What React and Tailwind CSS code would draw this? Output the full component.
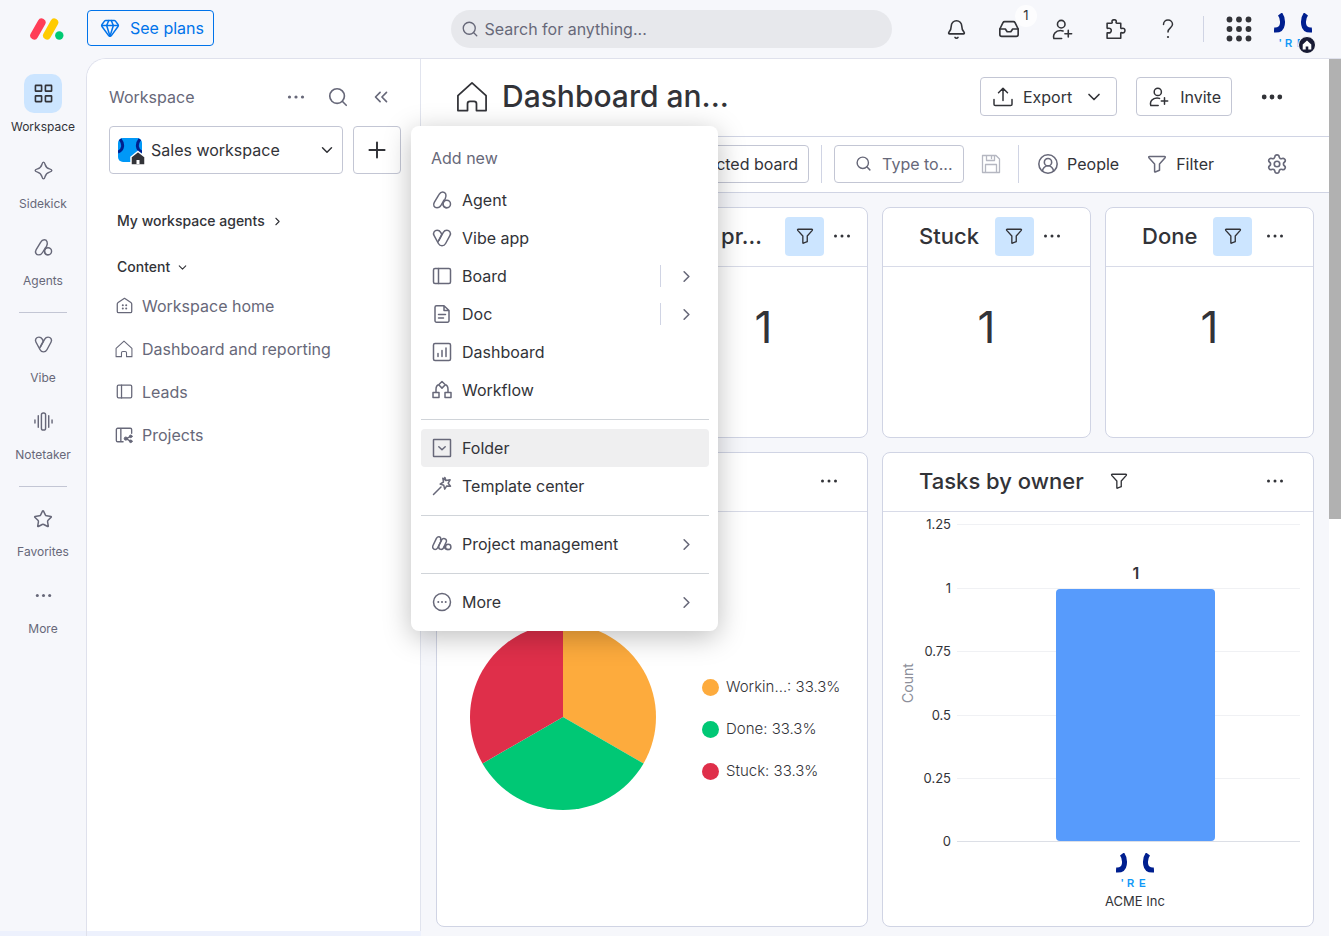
import React, { useState } from 'react';
import {
  Bell,
  ChevronDown,
  ChevronRight,
  ChevronsLeft,
  CircleUserRound,
  Gem,
  Inbox,
  Plus,
  Search,
  Settings,
  Star,
} from 'lucide-react';

const Icon = ({ size = 20, stroke = 1.5, children }) => (
  <svg
    width={size}
    height={size}
    viewBox="0 0 20 20"
    fill="none"
    stroke="currentColor"
    strokeWidth={stroke}
    strokeLinecap="round"
    strokeLinejoin="round"
    className="shrink-0"
    aria-hidden="true"
  >
    {children}
  </svg>
);

const DotsIcon = ({ size = 20, r = 1.6 }) => (
  <svg width={size} height={size} viewBox="0 0 20 20" fill="currentColor" className="shrink-0" aria-hidden="true">
    <circle cx="3.5" cy="10" r={r} />
    <circle cx="10" cy="10" r={r} />
    <circle cx="16.5" cy="10" r={r} />
  </svg>
);

const AgentIcon = (props) => (
  <Icon {...props}>
    <path d="M11.6 12.2 13.2 8.8c1.8-3.800.4-6.900-2.400-6.900-1.700 0-2.900 1-3.700 2.500L2.300 12.300c-1.700 3 0 5.500 2.700 5.500 2 0 3.200-1 4.200-2.800l2.900-5" />
    <circle cx="14.8" cy="14" r="3.700" />
    <path d="M11.1 14c0 2.200 1.500 3.700 3.700 3.700" />
  </Icon>
);

const VibeIcon = (props) => (
  <Icon {...props}>
    <path d="M9.800 6.400 8.700 4.300C7.900 2.900 6.600 2.200 5.200 2.200 2.500 2.200.700 4.900 2 7.400l4.400 8.100c1.600 3 5.600 3 7.200 0L18 7.400c1.300-2.500-.5-5.200-3.200-5.200-1.400 0-2.700.7-3.500 2.100L6.900 12.300" />
    <path d="m9.800 6.400-3.700 7.200" />
  </Icon>
);

const BoardIcon = (props) => (
  <Icon {...props}>
    <rect x="1.500" y="2.500" width="17" height="15" rx="1.500" />
    <path d="M6.500 2.500v15" />
  </Icon>
);

const SharedBoardIcon = (props) => (
  <Icon {...props}>
    <path d="M9 17.500H3A1.500 1.500 0 0 1 1.500 16V4A1.500 1.500 0 0 1 3 2.500h14A1.500 1.500 0 0 1 18.500 4v4M6.500 2.500v15M12.500 14l5-2.500M12.500 14l5 3" />
    <g fill="currentColor" strokeWidth="1">
      <circle cx="12" cy="14" r="1.800" />
      <circle cx="17.500" cy="11.500" r="1.500" />
      <circle cx="17.500" cy="17" r="1.500" />
    </g>
  </Icon>
);

const DocIcon = (props) => (
  <Icon {...props}>
    <path d="M12 1.800H4.500A1.500 1.500 0 0 0 3 3.300v13.400a1.500 1.500 0 0 0 1.500 1.500h11a1.500 1.500 0 0 0 1.500-1.500V6.500zM12 1.800v4.700h5M6.500 10.500h7M6.500 14h5" />
  </Icon>
);

const DashboardIcon = (props) => (
  <Icon {...props}>
    <rect x="1.500" y="1.500" width="17" height="17" rx="1.500" />
    <path d="M6 11.500v3M10 8.500v6M14 6v8.500" />
  </Icon>
);

const WorkflowIcon = (props) => (
  <Icon {...props}>
    <path d="m10 1.500 3.300 3.300L10 8.100 6.700 4.800zM6.700 4.800C4.800 5.200 4 7 4 9.500v2.500M13.300 4.800C15.200 5.200 16 7 16 9.500v2.500" />
    <rect x="1" y="12.500" width="6" height="5" />
    <rect x="13" y="12.500" width="6" height="5" />
  </Icon>
);

const FolderIcon = (props) => (
  <Icon {...props}>
    <rect x="1.500" y="1.500" width="17" height="17" rx=".5" />
    <path d="m6.800 8.800 3.200 3 3.200-3" />
  </Icon>
);

const WandIcon = (props) => (
  <Icon {...props}>
    <path d="M1.500 18.500 9 11M12.800 1.500l1.300 3 4-.7-1.900 3.400 2.300 3-3.800-.3-2 3.300-.9-3.900-3.700-1.200 3.400-2.100-.700-3.800 2.900 2.300z" />
  </Icon>
);

const ProjectIcon = (props) => (
  <Icon {...props}>
    <path d="M8.500 5.800c.7-1.700-.2-3-1.700-3-1 0-1.800.6-2.400 1.600L1 11.500c-.9 1.900.2 4 2.100 4 1.100 0 1.900-.6 2.500-1.600l4-7.900c1.400-2.500 5.600-1.400 4.700 1.800l-2.600 5.800c-1.100 2.500-5 2.400-5-.5 0-.6.2-1.100.5-1.700" />
    <path d="M9.400 6.300 7.200 11" />
    <circle cx="16.200" cy="12.900" r="2.700" />
    <path d="M12.200 12.500c.3 2 1.900 3.100 4 3.100" />
  </Icon>
);

const MoreCircleIcon = (props) => (
  <Icon {...props}>
    <circle cx="10" cy="10" r="8.500" />
    <path d="M6.300 10h.01M10 10h.01M13.700 10h.01" strokeWidth="2" />
  </Icon>
);

const FilterIcon = (props) => (
  <Icon {...props}>
    <path d="M2.500 2.500h15c.8 0 1 .6.600 1.200L12.500 10v6.300L8.200 18a.4.400 0 0 1-.6-.4V10L1.900 3.700c-.4-.6-.2-1.200.6-1.200z" />
  </Icon>
);

const HomeIcon = (props) => (
  <Icon {...props}>
    <path d="m10 1.200 8.800 8v9.300h-6v-4.300c0-1-.5-1.500-1.500-1.500H8.700c-1 0-1.500.5-1.500 1.500v4.300h-6V9.200z" />
  </Icon>
);

const WorkspaceHomeIcon = (props) => (
  <Icon {...props}>
    <path d="m10 1.500 7.500 5c.6.4 1 1 1 1.800V17c0 1-.5 1.500-1.500 1.500H3c-1 0-1.500-.5-1.500-1.500V8.300c0-.8.4-1.400 1-1.800z" />
    <path d="M8 9.700h.01M12 9.700h.01M8 13.500h.01M12 13.500h.01" strokeWidth="2.400" />
  </Icon>
);

const InviteIcon = (props) => (
  <Icon {...props}>
    <circle cx="8.800" cy="4.900" r="3.600" />
    <path d="M9.200 18.500H1.800c-1.300-4 1.700-7.500 6.200-7.500 1 0 1.700.1 2.500.4M15.500 10.800v6.400M12.300 14h6.400" />
  </Icon>
);

const PuzzleIcon = (props) => (
  <Icon {...props}>
    <path d="M2 4h4c.8 0 1-.4.800-1C6.300 1.500 7.300.700 8.700.700s2.400.8 1.900 2.300c-.2.600 0 1 .8 1H15v4.300c0 .7.400.9 1 .7 1.800-.6 3 .3 3 2s-1.200 2.600-3 2c-.6-.2-1 0-1 .7v4.600H2v-4.600c0-.7.300-.8.900-.6C4.600 13.600 6 12.700 6 11s-1.400-2.600-3.100-2.100C2.300 9.100 2 9 2 8.300z" />
  </Icon>
);

const HelpIcon = (props) => (
  <Icon {...props}>
    <path d="M5.500 5.500C5.500 2.800 7.500 1 10 1s4.500 1.800 4.500 4.300C14.500 9 10 8.800 10 13" />
    <path d="M10 18h.01" strokeWidth="2.200" />
  </Icon>
);

const ExportIcon = (props) => (
  <Icon {...props}>
    <path d="M1 12.500v4.700c0 .8.500 1.300 1.300 1.300h15.400c.8 0 1.300-.5 1.300-1.300v-4.700M10 13.500v-12M5.500 5.800 10 1.300l4.500 4.500" />
  </Icon>
);

const SaveIcon = (props) => (
  <Icon {...props}>
    <path d="M1.500 1.500H15L18.500 5v13.500h-17zM5.500 1.500v5h8v-5M4.500 18.500v-8h11v8M10.500 2.500v2" />
  </Icon>
);

const WorkspaceIcon = (props) => (
  <Icon {...props}>
    <rect x="1.500" y="1.500" width="6.500" height="6" rx=".5" />
    <rect x="12" y="1.500" width="6.500" height="6" rx=".5" />
    <rect x="1.500" y="12.500" width="6.500" height="6" rx=".5" />
    <rect x="12" y="12.500" width="6.500" height="6" rx=".5" />
  </Icon>
);

const SidekickIcon = (props) => (
  <Icon {...props}>
    <path d="M10 1.200c1 0 1.300 1 1.700 2.500.8 2.900 1.700 3.800 4.600 4.600 1.500.4 2.500.7 2.500 1.700s-1 1.300-2.500 1.700c-2.900.8-3.800 1.700-4.600 4.600-.4 1.500-.7 2.500-1.700 2.500s-1.300-1-1.700-2.500c-.8-2.900-1.700-3.800-4.600-4.600C2.200 11.300 1.200 11 1.200 10s1-1.300 2.500-1.700c2.900-.8 3.800-1.700 4.600-4.600.4-1.500.7-2.500 1.700-2.500z" />
  </Icon>
);

const NotetakerIcon = (props) => (
  <Icon {...props}>
    <rect x="7.800" y="1" width="4.400" height="18" rx="2" />
    <path d="M4.500 4v12M15.500 4v12M1 8.500v3M19 8.500v3" />
  </Icon>
);

const Logo = () => (
  <svg width="34" height="22" viewBox="0 0 34 22" aria-hidden="true">
    <g strokeWidth="8" strokeLinecap="round">
      <path d="M4.200 17.500 11.600 4.500" stroke="#ff3d57" />
      <path d="M17 17.500 24.300 4.500" stroke="#ffcb00" />
    </g>
    <circle cx="29.300" cy="17.500" r="4.200" fill="#00ca72" />
  </svg>
);

const AcmeLogo = () => (
  <svg width="38" height="36" viewBox="0 0 38 36" aria-hidden="true">
    <g fill="none" stroke="#001f8f" strokeWidth="5">
      <path d="M6 1C8.300 4 9 7 8.300 11.500 7.700 15.500 5 17.500 0 17" />
      <path d="M32 1C29.700 4 29 7 29.700 11.500 30.300 15.500 33 17.500 38 17" />
    </g>
    <g fill="#1098f7" fontFamily="Liberation Sans, sans-serif" fontWeight="700" fontSize="10">
      <text x="5" y="34">'</text>
      <text x="11" y="34">R</text>
      <text x="23" y="34">E</text>
    </g>
  </svg>
);

const railGroups = [
  [
    { label: 'Workspace', icon: <WorkspaceIcon size={19} stroke={1.7} />, active: true },
    { label: 'Sidekick', icon: <SidekickIcon size={19} /> },
    { label: 'Agents', icon: <AgentIcon size={19} /> },
  ],
  [
    { label: 'Vibe', icon: <VibeIcon size={19} /> },
    { label: 'Notetaker', icon: <NotetakerIcon size={19} /> },
  ],
  [
    { label: 'Favorites', icon: <Star size={20} strokeWidth={1.8} /> },
    { label: 'More', icon: <DotsIcon size={19} /> },
  ],
];

const contentItems = [
  { label: 'Workspace home', icon: <WorkspaceHomeIcon size={17} /> },
  { label: 'Dashboard and reporting', icon: <HomeIcon size={18} stroke={1.2} /> },
  { label: 'Leads', icon: <BoardIcon size={17} /> },
  { label: 'Projects', icon: <SharedBoardIcon size={18} /> },
];

const menuGroups = [
  [
    { label: 'Agent', icon: <AgentIcon /> },
    { label: 'Vibe app', icon: <VibeIcon /> },
    { label: 'Board', icon: <BoardIcon />, arrow: true, split: true },
    { label: 'Doc', icon: <DocIcon />, arrow: true, split: true },
    { label: 'Dashboard', icon: <DashboardIcon /> },
    { label: 'Workflow', icon: <WorkflowIcon /> },
  ],
  [
    { label: 'Folder', icon: <FolderIcon />, active: true },
    { label: 'Template center', icon: <WandIcon /> },
  ],
  [{ label: 'Project management', icon: <ProjectIcon />, arrow: true }],
  [{ label: 'More', icon: <MoreCircleIcon />, arrow: true }],
];

const statusShare = [
  { label: 'Workin...: 33.3%', dot: 'bg-[#fdab3d]' },
  { label: 'Done: 33.3%', dot: 'bg-[#00c875]' },
  { label: 'Stuck: 33.3%', dot: 'bg-[#df2f4a]' },
];

const ticks = [
  { label: '1.25', y: 12 },
  { label: '1', y: 76 },
  { label: '0.75', y: 139 },
  { label: '0.5', y: 203 },
  { label: '0.25', y: 266 },
  { label: '0', y: 329 },
];

const TopButton = ({ label, children }) => (
  <button aria-label={label} className="relative flex size-9 shrink-0 items-center justify-center">
    {children}
  </button>
);

const TopBar = () => (
  <header className="flex h-[58px] items-center">
    <div className="flex flex-1 items-center gap-[23px] pl-[30px]">
      <Logo />
      <button className="mb-[2px] flex h-9 items-center gap-[10px] rounded border border-[#0073ea] pr-[9px] pl-3 text-[#0073ea]">
        <Gem size={20} strokeWidth={1.8} />
        See plans
      </button>
    </div>
    <label className="flex h-[38px] w-[441px] items-center gap-1.5 rounded-full bg-[#e7e8ec] pr-3 pl-[10px] text-[#676879]">
      <Search size={18} strokeWidth={1.800} className="shrink-0" />
      <input
        type="search"
        aria-label="Search for anything"
        placeholder="Search for anything..."
        className="w-full bg-transparent outline-none placeholder:text-[#676879]"
      />
    </label>
    <div className="flex flex-1 items-center justify-end gap-[17px] pr-[29px]">
      <TopButton label="Notifications"><Bell size={21} strokeWidth={1.8} /></TopButton>
      <TopButton label="Inbox">
        <Inbox size={22} strokeWidth={1.8} />
        <span className="absolute -top-[6px] left-6 flex size-[22px] items-center justify-center rounded-full bg-white/80 text-[13px]">1</span>
      </TopButton>
      <TopButton label="Invite members"><InviteIcon size={21} /></TopButton>
      <TopButton label="Apps"><PuzzleIcon size={21} /></TopButton>
      <TopButton label="Help"><HelpIcon /></TopButton>
      <span className="h-[26px] w-px bg-[#d0d4e4]" />
      <TopButton label="Products">
        <svg width="26" height="26" viewBox="0 0 26 26" fill="currentColor" aria-hidden="true">
          {[3.5, 13, 22.5].map(y => [3.5, 13, 22.5].map(x => <circle key={`${x}-${y}`} cx={x} cy={y} r="2.900" />))}
        </svg>
      </TopButton>
      <button aria-label="Account" className="relative pt-[3px]">
        <AcmeLogo />
        <span className="absolute -right-[4px] -bottom-[5px] flex size-[18px] items-center justify-center rounded-full border border-white bg-[#181b34] text-white">
          <svg width="10" height="10" viewBox="0 0 10 10" fill="currentColor" aria-hidden="true">
            <path d="M5 .5 9.300 4.500V9.500H6.300V6.500H3.700V9.500H.7V4.500z" />
          </svg>
        </span>
      </button>
    </div>
  </header>
);

const Rail = () => (
  <nav className="w-[86px] shrink-0 border-b-[5px] border-[#edf1fd] pt-4 text-xs text-[#676879]">
    {railGroups.map((group, index) => (
      <div key={index}>
        {index > 0 && <hr className="mx-auto mt-[7px] mb-3 w-12 border-[#c3c6d4]" />}
        {group.map(({ label, icon, active }) => (
          <a key={label} href="#" className="flex flex-col items-center pb-4">
            <span className={`mb-1.5 flex h-[39px] w-[38px] items-center justify-center rounded-[10px] ${active ? 'bg-[#cce5ff] text-[#323338]' : ''}`}>
              {icon}
            </span>
            <span className={active ? 'text-[#323338]' : ''}>{label}</span>
          </a>
        ))}
      </div>
    ))}
  </nav>
);

const AddMenu = () => (
  <div className="absolute top-0 left-full z-20 ml-[10px] w-[307px] rounded-lg bg-white p-[10px] pr-[9px] shadow-[0_6px_28px_rgba(0,0,0,0.26)]">
    <p className="flex h-[45px] items-center pb-[2px] pl-[10px] text-[#676879]">Add new</p>
    {menuGroups.map((group, index) => (
      <div key={index}>
        {index > 0 && <hr className="mt-[10px] mb-[9px] border-[#d0d4d9]" />}
        {group.map(({ label, icon, arrow, split, active }) => (
          <button
            key={label}
            className={`flex h-[38px] w-full items-center gap-[10px] rounded pr-[13px] pl-[11px] ${active ? 'bg-[#efeff0]' : ''}`}
          >
            <span className="text-[#676879]">{icon}</span>
            <span className="flex-1 text-left">{label}</span>
            {split && <span className="mr-[6px] h-[22px] w-px bg-[#d0d4e4]" />}
            {arrow && <ChevronRight size={19} strokeWidth={2} className="text-[#676879]" />}
          </button>
        ))}
      </div>
    ))}
  </div>
);

const Sidebar = () => {
  const [menuOpen, setMenuOpen] = useState(true);

  return (
    <aside className="flex w-[334px] shrink-0 flex-col bg-[#edf1fd] pb-[5px]">
      <div className="flex-1 border-r border-[#e1e4ee] bg-white pt-[18px]">
        <div className="flex h-10 items-center pr-7 pl-[22px] text-[#676879]">
          <h2 className="flex-1">Workspace</h2>
          <div className="flex items-center gap-[21px]">
            <button aria-label="Workspace options"><DotsIcon size={20} /></button>
            <button aria-label="Search workspace"><Search size={22} strokeWidth={1.8} /></button>
            <button aria-label="Collapse"><ChevronsLeft size={22} strokeWidth={1.8} /></button>
          </div>
        </div>

        <div className="mt-[9px] flex gap-[10px] pr-[19px] pl-[22px]">
          <div className="relative flex-1">
            <select
              aria-label="Workspace"
              className="h-12 w-full appearance-none rounded border border-[#c3c6d4] bg-white pr-8 pl-[41px] outline-none"
            >
              <option>Sales workspace</option>
            </select>
            <svg width="28" height="28" viewBox="0 0 28 28" className="pointer-events-none absolute top-[11px] left-2" aria-hidden="true">
              <clipPath id="workspace-tile"><rect x="1" y="1" width="24" height="24" rx="5" /></clipPath>
              <g clipPath="url(#workspace-tile)">
                <path d="M1 1h24v24H1z" fill="#0098f7" />
                <g fill="none" stroke="#001f8f" strokeWidth="3">
                  <path d="M3 2c4 5 3.500 11-2 13M23 2c-4 5-3.500 11 2 13" />
                </g>
              </g>
              <path d="M21 14.500 28 20v8H14v-8z" fill="#323338" stroke="#fff" strokeWidth="1.500" />
              <path d="M19.500 23h3v4h-3z" fill="#fff" />
            </svg>
            <ChevronDown size={18} className="pointer-events-none absolute top-[15px] right-[7px]" />
          </div>
          <div className="relative">
            <button
              aria-label="Add new"
              aria-expanded={menuOpen}
              onClick={() => setMenuOpen(open => !open)}
              className="flex size-12 items-center justify-center rounded border border-[#c3c6d4]"
            >
              <Plus size={26} strokeWidth={1.8} />
            </button>
            {menuOpen && <AddMenu />}
          </div>
        </div>

        <button className="mt-[35px] ml-[30px] flex h-6 items-center gap-1.5 text-sm font-medium">
          My workspace agents
          <ChevronRight size={13} />
        </button>
        <button className="mt-[22px] ml-[30px] flex h-6 items-center gap-1.5 text-sm font-medium">
          Content
          <ChevronDown size={13} />
        </button>
        <ul className="mt-[5px] pl-[27px] text-[#676879]">
          {contentItems.map(({ label, icon }) => (
            <li key={label}>
              <a href="#" className="flex h-[43px] items-center gap-2">
                <span className="flex w-5 justify-center">{icon}</span>
                {label}
              </a>
            </li>
          ))}
        </ul>
      </div>
    </aside>
  );
};

const Divider = () => <span className="h-[38px] w-px bg-[#d0d4e4]" />;

const DashboardHeader = () => (
  <>
    <div className="flex h-[78px] items-center border-b border-[#d0d4e4] pr-[45px] pb-[2px] pl-[35px]">
      <HomeIcon size={32} stroke={1.100} />
      <h1 className="flex-1 pl-[14px] text-[30px] font-medium">Dashboard an...</h1>
      <button className="flex h-[39px] items-center gap-[10px] rounded border border-[#c3c6d4] px-3">
        <ExportIcon />
        Export
        <ChevronDown size={20} className="ml-0.5" />
      </button>
      <button className="ml-[19px] flex h-[39px] items-center gap-[11px] rounded border border-[#c3c6d4] pr-[10px] pl-3">
        <InviteIcon />
        Invite
      </button>
      <button aria-label="Dashboard options" className="ml-7"><DotsIcon size={24} r={2} /></button>
    </div>

    <div className="flex h-14 items-center justify-end border-b border-[#d0d4e4] pr-[41px] pb-[2px]">
      <button className="h-[38px] rounded border border-[#c3c6d4] px-[10px]">1 connected board</button>
      <span className="mx-3 flex"><Divider /></span>
      <label className="flex h-[38px] w-[130px] items-center gap-[10px] rounded border border-[#c3c6d4] pl-5 text-[#676879]">
        <Search size={17} className="shrink-0" />
        <input
          type="text"
          aria-label="Filter by text"
          placeholder="Type to..."
          className="w-full min-w-0 bg-transparent outline-none placeholder:text-[#676879]"
        />
      </label>
      <button aria-label="Save view" className="mx-[17px] text-[#b5b7c1]"><SaveIcon stroke={1.300} /></button>
      <Divider />
      <button className="ml-[18px] flex items-center gap-2">
        <CircleUserRound size={22} strokeWidth={1.700} className="text-[#676879]" />
        People
      </button>
      <button className="ml-7 flex items-center gap-[9px]">
        <span className="text-[#676879]"><FilterIcon /></span>
        Filter
      </button>
      <button aria-label="Settings" className="ml-[52px] text-[#676879]"><Settings size={22} strokeWidth={1.800} /></button>
    </div>
  </>
);

const Widget = ({ title, className = '', headerClass = 'pr-5', filter, children }) => (
  <section className={`min-w-0 overflow-hidden rounded-lg border border-[#d0d4e4] bg-white ${className}`}>
    <div className={`flex h-[59px] items-center border-b border-[#d8dbe8] pb-[2px] pl-9 ${headerClass}`}>
      {title && <h3 className="mr-4 text-[22px] font-medium whitespace-nowrap">{title}</h3>}
      {filter && (
        <button
          aria-label="Widget filter"
          className={`flex size-[39px] shrink-0 items-center justify-center rounded ${filter === 'on' ? 'bg-[#cce5ff]' : ''}`}
        >
          <FilterIcon size={18} />
        </button>
      )}
      <button aria-label="Widget options" className="ml-auto flex w-9 shrink-0 justify-center"><DotsIcon size={20} r={1.500} /></button>
    </div>
    {children}
  </section>
);

const NumberWidget = ({ title, value, headerClass }) => (
  <Widget title={title} filter="on" headerClass={headerClass}>
    <p className="pt-[38px] pb-[88px] text-center text-[44px] leading-[44px]">{value}</p>
  </Widget>
);

const StatusPie = () => (
  <div className="flex h-[414px] items-center pb-1 pl-8">
    <svg width="188" height="188" viewBox="-94 -94 188 188" role="img" aria-label="Tasks by status">
      <path d="M0 0V-93A93 93 0 0 1 80.540 46.500z" fill="#fdab3d" />
      <path d="M0 0 80.540 46.500A93 93 0 0 1-80.540 46.500z" fill="#00c875" />
      <path d="M0 0-80.540 46.500A93 93 0 0 1 0-93z" fill="#df2f4a" />
    </svg>
    <ul className="mt-6 ml-[45px] text-[15px] font-light">
      {statusShare.map(({ label, dot }) => (
        <li key={label} className="flex h-[42px] items-center gap-[7px]">
          <span className={`size-[17px] rounded-full ${dot}`} />
          {label}
        </li>
      ))}
    </ul>
  </div>
);

const OwnerChart = () => (
  <svg viewBox="0 0 430 414" className="w-full" role="img" aria-label="Tasks by owner" fill="#323338" fontSize="13">
    {ticks.map(({ label, y }) => (
      <g key={label}>
        <path d={`M74 ${y + 0.5}H417`} stroke={label === '0' ? '#dcdfe6' : '#f0f1f4'} />
        <text x="68" y={y + 5} textAnchor="end">{label}</text>
      </g>
    ))}
    <rect x="173" y="77" width="159" height="252" rx="4" fill="#579bfc" />
    <text x="253" y="67" textAnchor="middle" fontSize="16" fontWeight="600">1</text>
    <text transform="translate(30 171) rotate(-90)" textAnchor="middle" fontSize="14" fill="#8d8f9a">Count</text>
    <g transform="translate(233 341)"><AcmeLogo /></g>
    <text x="252" y="394" textAnchor="middle">ACME Inc</text>
  </svg>
);

const App = () => (
  <div className="flex min-h-screen flex-col bg-[#f6f7fb] font-['Inter','Open_Sans',sans-serif] text-base text-[#323338]">
    <TopBar />
    <div className="flex flex-1">
      <Rail />
      <div className="flex min-w-0 flex-1 overflow-hidden rounded-tl-[20px] border-t border-l border-[#dfe1ec] bg-white">
        <Sidebar />
        <main className="min-w-0 flex-1 bg-[#f6f7fb]">
          <div className="bg-white"><DashboardHeader /></div>
          <div className="grid grid-cols-4 gap-[14px] px-[15px] pt-[14px] pb-[9px]">
            <NumberWidget />
            <NumberWidget title="In pr..." value="1" headerClass="pr-2 [&>h3]:min-w-[73px]" />
            <NumberWidget title="Stuck" value="1" />
            <NumberWidget title="Done" value="1" />
            <Widget className="col-span-2">
              <StatusPie />
            </Widget>
            <Widget title="Tasks by owner" className="col-span-2" filter="off">
              <OwnerChart />
            </Widget>
          </div>
        </main>
        <div className="w-3 shrink-0 bg-white">
          <div className="h-[460px] bg-[#b1b1b1]" />
        </div>
      </div>
    </div>
  </div>
);

export default App;
